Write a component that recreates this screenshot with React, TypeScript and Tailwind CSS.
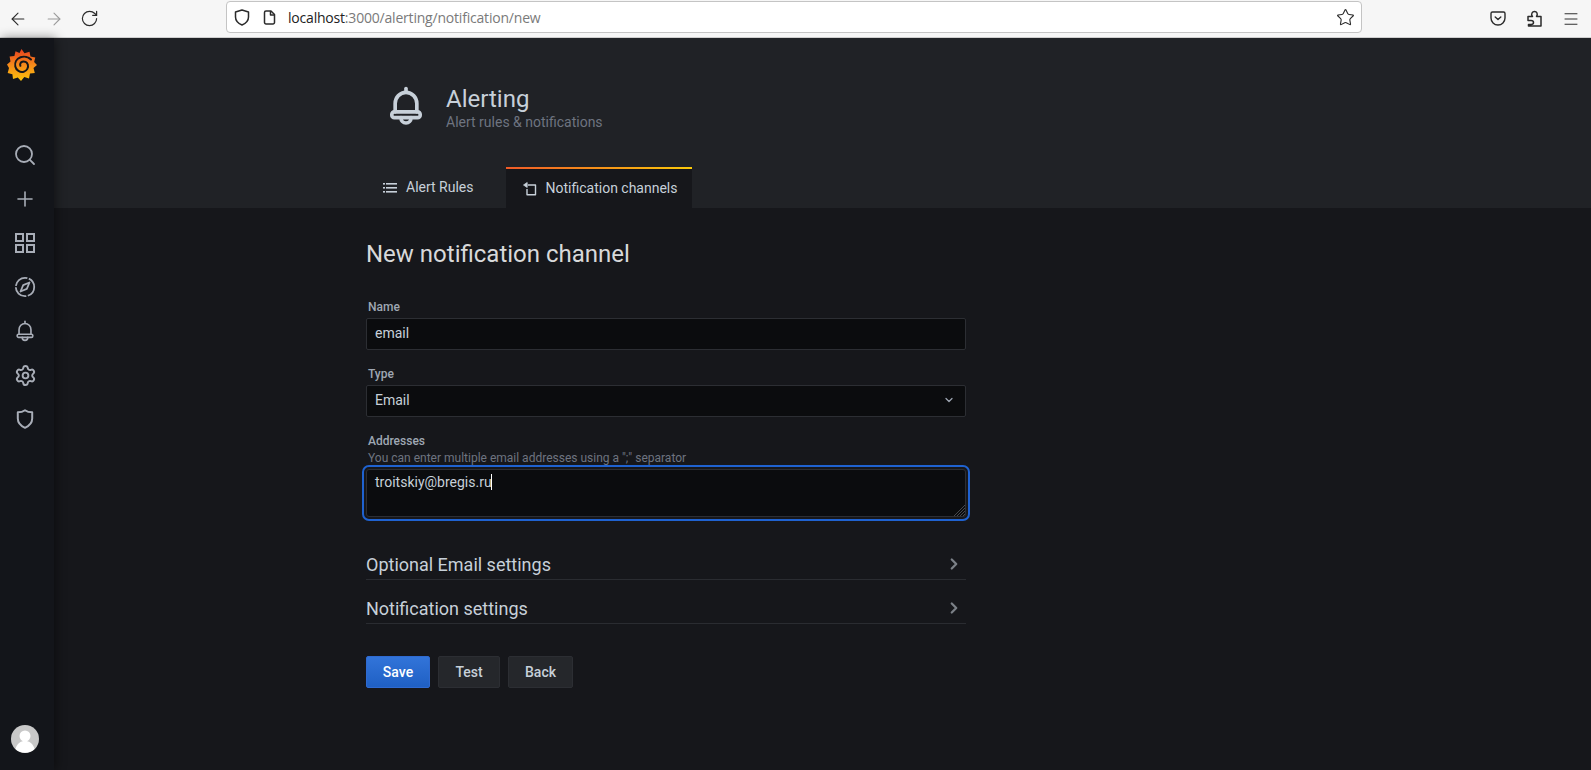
import { ChevronDown, ChevronRight, Search, Plus, Settings, ArrowLeft, ArrowRight, RotateCw, Star, Menu } from "lucide-react"

function GrafanaLogo() {
    return (
        <svg width="30" height="32" viewBox="0 0 30 32">
            <defs>
                <linearGradient id="gf" x1="0" y1="0" x2="0" y2="1">
                    <stop offset="0" stopColor="#e8401f" />
                    <stop offset="0.5" stopColor="#f58a1a" />
                    <stop offset="1" stopColor="#fcc30b" />
                </linearGradient>
            </defs>
            <path
                fill="url(#gf)"
                d="M14.500 0l3 4.200 5-1.500 1 4.800 4.800 1-1.200 4.500L30 16l-3.500 3 1.300 5-4.800.6-1 5-4.700-1.600-3.300 4-3.200-3.500-4.800 1.500-.6-4.800-4.700-1.300L2 19 0 15.500l3.500-3L2.600 7.500l4.800-.6L8.500 2.200l4 1.800z"
            />
            <path
                fill="none"
                stroke="#15171b"
                strokeWidth="2"
                strokeLinecap="round"
                d="M24 10.500C21.500 8 17 7 13.500 8.300 9.500 9.800 7.500 13.500 8.300 17.500 9.100 21.300 13 23.700 16.800 22.700 20 21.800 21.700 18.500 20.800 15.500 20 13.200 17.500 12 15.200 12.700 13.500 13.300 12.700 15.200 13.400 16.800"
            />
        </svg>
    )
}

function BellIcon({ size, stroke }: { size: number; stroke: number }) {
    return (
        <svg width={size} height={size} viewBox="0 0 24 24" fill="none" stroke="currentColor" strokeWidth={stroke} strokeLinecap="round" strokeLinejoin="round">
            <path d="M12 1.500V3.800" />
            <path d="M5.500 15.500V10.500C5.500 6.800 8.400 3.800 12 3.800S18.500 6.800 18.500 10.500V15.500" />
            <rect x="3.500" y="15.500" width="17" height="3.500" rx="1.500" />
            <path d="M9 19C9 21 10.300 22.200 12 22.200S15 21 15 19" />
        </svg>
    )
}

function AppsIcon() {
    return (
        <svg width="22" height="22" viewBox="0 0 22 22" fill="none" stroke="currentColor" strokeWidth="2">
            <rect x="2" y="2" width="7" height="7" />
            <rect x="13" y="2" width="7" height="7" />
            <rect x="2" y="13" width="7" height="7" />
            <rect x="13" y="13" width="7" height="7" />
        </svg>
    )
}

function CompassIcon() {
    return (
        <svg width="22" height="22" viewBox="0 0 22 22" fill="none" stroke="currentColor" strokeWidth="1.800" strokeLinejoin="round">
            <circle cx="11" cy="11" r="9.200" strokeDasharray="15.500 1.500" strokeDashoffset="4" />
            <path d="M15.500 6.500L12.800 12.800 6.500 15.500 9.200 9.200z" />
        </svg>
    )
}

function ShieldIcon() {
    return (
        <svg width="18" height="20" viewBox="0 0 20 22" fill="none" stroke="currentColor" strokeWidth="2.200" strokeLinejoin="round">
            <path d="M2 3.500C5 3.500 7.800 2.800 10 1.200 12.200 2.800 15 3.500 18 3.500V10.500C18 15.500 14.500 18.800 10 20.800 5.500 18.800 2 15.500 2 10.500z" />
        </svg>
    )
}

function ListIcon() {
    return (
        <svg width="14" height="10" viewBox="0 0 14 10" fill="currentColor">
            <rect x="0" y="0" width="2" height="1.600" />
            <rect x="3" y="0" width="11" height="1.600" />
            <rect x="0" y="4" width="2" height="1.600" />
            <rect x="3" y="4" width="11" height="1.600" />
            <rect x="0" y="8" width="2" height="1.600" />
            <rect x="3" y="8" width="11" height="1.600" />
        </svg>
    )
}

function ChannelIcon() {
    return (
        <svg width="16" height="16" viewBox="0 0 16 16" fill="none" stroke="currentColor" strokeWidth="1.400" strokeLinejoin="round">
            <path d="M6 4H13.500V13.800H5V8" />
            <path d="M1.500 4L5.200 1.500V6.500z" fill="currentColor" strokeWidth="0.800" />
        </svg>
    )
}

function ShieldBrowser() {
    return (
        <svg width="16" height="17" viewBox="0 0 16 17" fill="none" stroke="currentColor" strokeWidth="1.500" strokeLinejoin="round">
            <path d="M1.500 3L8 1l6.500 2v5c0 4-3 6.500-6.500 8C4.500 14.500 1.500 12 1.500 8z" />
        </svg>
    )
}

function PageIcon() {
    return (
        <svg width="13" height="15" viewBox="0 0 13 15" fill="none" stroke="currentColor" strokeWidth="1.500" strokeLinejoin="round">
            <path d="M1.500 2.500a1.500 1.500 0 0 1 1.500-1.500H8L11.500 4.500V12.500a1.500 1.500 0 0 1-1.500 1.500H3a1.500 1.500 0 0 1-1.500-1.500z" />
            <path d="M7.500 1V5H11.500" />
        </svg>
    )
}

function PocketIcon() {
    return (
        <svg width="16" height="15" viewBox="0 0 16 15" fill="none" stroke="currentColor" strokeWidth="1.400" strokeLinecap="round" strokeLinejoin="round">
            <path d="M2.500 1H13.500A1.500 1.500 0 0 1 15 2.500V7A7 7 0 0 1 1 7V2.500A1.500 1.500 0 0 1 2.500 1z" />
            <path d="M5.200 6L8 8.500 10.800 6" />
        </svg>
    )
}

function ExtensionIcon() {
    return (
        <svg width="15" height="17" viewBox="0 0 15 17" fill="none" stroke="currentColor" strokeWidth="1.500" strokeLinejoin="round">
            <path d="M1 6.500H5.500C4.500 5.500 4.200 4.500 5 3 6 1.200 9 1 10 3 10.500 4.300 10.200 5.500 9.500 6.500H14V16H1.500V14.500H4C6 14.500 6.500 13.500 6.500 12.500S6 10.500 4 10.500H1z" />
        </svg>
    )
}

function Avatar() {
    return (
        <svg width="28" height="28" viewBox="0 0 28 28">
            <circle cx="14" cy="14" r="14" fill="#c8c8c8" />
            <circle cx="14" cy="11" r="5.500" fill="#ffffff" />
            <path d="M4.500 24C6 18.500 9.500 16 14 16S22 18.500 23.500 24A14 14 0 0 1 4.500 24z" fill="#ffffff" />
        </svg>
    )
}

function ResizeGrip() {
    return (
        <svg width="11" height="11" viewBox="0 0 11 11" fill="none" stroke="#55585e" strokeWidth="0.800" className="pointer-events-none absolute bottom-[1px] right-[1px]">
            <path d="M0 11L11 0M3 11L11 3M6 11L11 6M9 11L11 9" />
        </svg>
    )
}

function BrowserBar() {
    return (
        <div className="flex h-[38px] shrink-0 items-center border-b border-[#cfcfcf] bg-[#f6f6f6] text-[#2b2b2b]">
            <div className="flex w-[226px] shrink-0 items-center pl-[8px]">
                <ArrowLeft size={20} strokeWidth={1.300} />
                <ArrowRight size={20} strokeWidth={1.300} className="ml-[16px] text-[#9a9a9a]" />
                <RotateCw size={19} strokeWidth={1.500} className="ml-[16px]" />
            </div>
            <div className="mb-[3px] flex h-[32px] w-[1136px] items-center rounded-[4px] border border-[#c4c4c4] bg-white pl-[7px] pr-[6px]">
                <ShieldBrowser />
                <span className="ml-[13px]"><PageIcon /></span>
                <span className="ml-[12px] font-['Open_Sans',sans-serif] text-[14px] tracking-[-0.2px] text-[#222222]">
                    localhost<span className="text-[#7a7a7a]">:3000/alerting/notification/new</span>
                </span>
                <Star size={19} strokeWidth={1.400} className="ml-auto" />
            </div>
            <div className="ml-[128px] flex items-center">
                <PocketIcon />
                <span className="ml-[21px]"><ExtensionIcon /></span>
                <Menu size={18} strokeWidth={1.300} className="ml-[20px]" />
            </div>
        </div>
    )
}

function Sidebar() {
    return (
        <aside className="z-10 flex w-[54px] shrink-0 flex-col items-center bg-[#13151a] pb-[17px] pr-[4px] text-[#a8adb7] shadow-[2px_0_10px_rgba(0,0,0,0.45)]">
            <div className="mr-[6px] mt-[11px]"><GrafanaLogo /></div>
            <div className="mt-[52px] flex flex-col items-center">
                <div className="flex h-[44px] items-center"><Search size={24} strokeWidth={1.800} /></div>
                <div className="flex h-[44px] items-center"><Plus size={24} strokeWidth={1.600} /></div>
                <div className="flex h-[44px] items-center"><AppsIcon /></div>
                <div className="flex h-[44px] items-center"><CompassIcon /></div>
                <div className="flex h-[44px] items-center"><BellIcon size={22} stroke={1.800} /></div>
                <div className="flex h-[44px] items-center"><Settings size={23} strokeWidth={2} /></div>
                <div className="flex h-[44px] items-center"><ShieldIcon /></div>
            </div>
            <div className="mt-auto"><Avatar /></div>
        </aside>
    )
}

function Field({ label, hint, children }: { label: string; hint?: string; children: React.ReactNode }) {
    return (
        <div className="mb-[16px]">
            <div className="pl-[2px] text-[12px] font-medium leading-[16px] text-[#9fa7b3]">{label}</div>
            {hint && <div className="mb-[-1px] pl-[2px] pt-[1px] text-[12px] leading-[17px] text-[#6e7480]">{hint}</div>}
            <div className="relative mt-[3px]">{children}</div>
        </div>
    )
}

function Collapse({ title }: { title: string }) {
    return (
        <div className="flex h-[44px] items-center justify-between border-b border-[#2a2c31] pr-[3px] pt-[13px] text-[18px] text-[#c7d0d9]">
            <span>{title}</span>
            <ChevronRight size={18} strokeWidth={3} className="text-[#7b8087]" />
        </div>
    )
}

export default function App() {
    return (
        <div className="flex h-[770px] flex-col overflow-hidden bg-[#16171b] font-['Roboto',sans-serif]">
            <BrowserBar />
            <div className="flex min-h-0 flex-1">
                <Sidebar />
                <main className="min-w-0 flex-1">
                    <div className="flex h-[170px] flex-col justify-end bg-[#202226] pl-[312px]">
                        <div className="mb-[36px] flex items-center pl-[20px]">
                            <span className="text-[#c7d0d9]"><BellIcon size={40} stroke={2.200} /></span>
                            <div className="ml-[20px] pt-[5px]">
                                <div className="text-[24px] leading-[27px] text-[#c7d0d9]">Alerting</div>
                                <div className="text-[14px] leading-[18px] text-[#6e7480]">Alert rules &amp; notifications</div>
                            </div>
                        </div>
                        <div className="flex h-[41px] text-[14px] text-[#c7d0d9]">
                            <div className="flex items-center gap-[9px] pl-[17px] pr-[16px]">
                                <ListIcon />
                                <span>Alert Rules</span>
                            </div>
                            <div className="ml-[16px] flex items-center gap-[8px] border-t-2 border-t-transparent bg-[#16171b] pl-[16px] pr-[14px] [border-image:linear-gradient(90deg,#f05a28,#fbca0a)_1]">
                                <ChannelIcon />
                                <span>Notification channels</span>
                            </div>
                        </div>
                    </div>
                    <div className="ml-[312px] w-[600px]">
                        <h1 className="mb-[29px] mt-[30px] text-[24px] font-normal leading-[32px] text-[#d8d9da]">New notification channel</h1>
                        <Field label="Name">
                            <input
                                readOnly
                                value="email"
                                className="block h-[32px] w-full rounded-[2px] border border-[#2c2e33] bg-[#0b0c0e] px-[8px] pb-[2px] text-[14px] text-[#c7d0d9] outline-none"
                            />
                        </Field>
                        <Field label="Type">
                            <div className="flex h-[32px] items-center justify-between rounded-[2px] border border-[#2c2e33] bg-[#0b0c0e] pb-[2px] pl-[8px] pr-[10px] text-[14px] text-[#c7d0d9]">
                                <span>Email</span>
                                <ChevronDown size={12} strokeWidth={2.500} className="text-[#9fa7b3]" />
                            </div>
                        </Field>
                        <Field label="Addresses" hint={'You can enter multiple email addresses using a ";" separator'}>
                            <textarea
                                readOnly
                                defaultValue="troitskiy@bregis.ru"
                                className="block h-[48px] w-full resize-none rounded-[3px] border border-[#2c2e33] bg-[#0b0c0e] px-[8px] py-[2px] text-[14px] leading-[20px] text-[#c7d0d9] outline-2 outline-offset-2 outline-[#1f62d0]"
                            />
                            <span className="absolute left-[125px] top-[5px] h-[16px] w-[1px] bg-white" />
                            <ResizeGrip />
                        </Field>
                        <div className="mt-[19px]">
                            <Collapse title="Optional Email settings" />
                            <Collapse title="Notification settings" />
                        </div>
                        <div className="mt-[32px] flex gap-[8px] text-[14px] font-medium">
                            <button className="h-[32px] w-[64px] rounded-[2px] border border-[#2f6ad0] bg-gradient-to-b from-[#3274d9] to-[#1f60c4] text-white">Save</button>
                            <button className="h-[32px] w-[62px] rounded-[2px] border border-[#2c2e33] bg-[#25272b] text-[#c7d0d9]">Test</button>
                            <button className="h-[32px] w-[65px] rounded-[2px] border border-[#2c2e33] bg-[#25272b] text-[#c7d0d9]">Back</button>
                        </div>
                    </div>
                </main>
            </div>
        </div>
    )
}
